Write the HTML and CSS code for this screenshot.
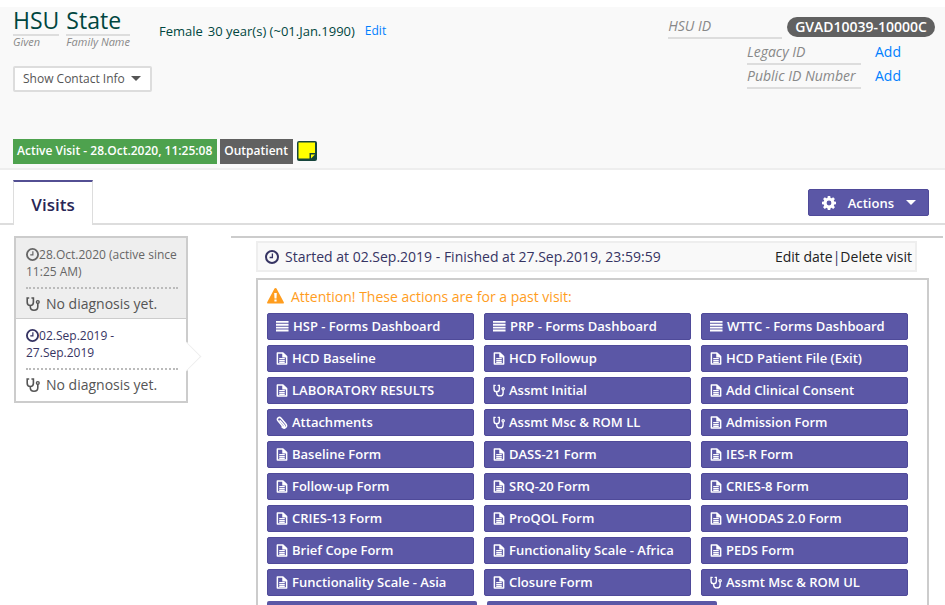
FILE: index.html
```html
<!DOCTYPE html>
<html lang="en">
<head>
<meta charset="utf-8">
<title>HSU State - Visits</title>
<link rel="stylesheet" href="styles.css">
</head>
<body>
<svg class="sprite" aria-hidden="true">
  <symbol id="bars" viewBox="0 0 14 12"><path fill="currentColor" d="M0 .5h13.500v2H0zM0 3.600h13.500v2H0zM0 6.700h13.500v2H0zM0 9.800h13.500v2H0z"/></symbol>
  <symbol id="file" viewBox="0 0 12 14"><path fill="none" stroke="currentColor" stroke-width="1.600" stroke-linejoin="round" d="M1 1h6l4 4v8H1z"/><path fill="currentColor" d="M6.300 1H7l4 4v1H6.300z"/><path stroke="currentColor" stroke-width="1.300" d="M3 7.200h6M3 9.200h6M3 11.200h6"/></symbol>
  <symbol id="steth" viewBox="0 0 14 14"><path fill="none" stroke="currentColor" stroke-width="1.600" stroke-linecap="round" d="M2.600 1H1.200v4.200c0 2 1.300 3.300 3.100 3.300s3.100-1.300 3.100-3.300V1H6M4.300 8.500v1.300c0 2 1.500 3.400 3.700 3.400s3.800-1.400 3.800-3.400V6.500"/><circle cx="11.800" cy="5" r="1.400" fill="none" stroke="currentColor" stroke-width="1.400"/></symbol>
  <symbol id="clip" viewBox="0 0 12 14"><path fill="none" stroke="currentColor" stroke-width="1.600" stroke-linecap="round" d="M4 5l4.300 5c1 1.200-.5 2.400-1.500 1.200L1.700 5.200C-.2 2.900 2.900.1 5 2.400l5 5.900c2.600 3.200-1.500 6.300-3.900 3.600"/></symbol>
  <symbol id="clock" viewBox="0 0 14 14"><circle cx="7" cy="7" r="6" fill="none" stroke="currentColor" stroke-width="2"/><path fill="none" stroke="currentColor" stroke-width="1.300" d="M7.400 3.500v4H4.600"/></symbol>
  <symbol id="warn" viewBox="0 0 17 16"><path fill="currentColor" fill-rule="evenodd" d="M8.500 0c.5 0 .8.200 1 .6l7.200 13.400c.5.900 0 1.600-.9 1.600H1.200c-.9 0-1.400-.7-.9-1.600L7.500.6c.2-.4.500-.6 1-.6zM7.200 5l.3 5.500h2L9.800 5zM7.400 11.600v2h2.200v-2z"/></symbol>
  <symbol id="gear" viewBox="0 0 14 14"><path fill="currentColor" fill-rule="evenodd" d="M5.800 0h2.400l.4 1.900 1 .4 1.600-1.100 1.700 1.700-1.100 1.600.4 1 1.800.3v2.400l-1.800.4-.4 1 1.100 1.600-1.700 1.700-1.600-1.100-1 .4-.4 1.800H5.800l-.4-1.800-1-.4-1.600 1.100-1.700-1.700 1.100-1.600-.4-1L0 8.200V5.800l1.800-.3.4-1-1.100-1.600 1.700-1.700 1.600 1.100 1-.4zM7 4.600a2.400 2.400 0 1 0 0 4.800 2.400 2.400 0 0 0 0-4.800z"/></symbol>
</svg>

<header class="patient">
  <div class="top">
    <div class="who">
      <div class="identity">
        <h1 class="names">
          <span class="name"><span class="value">HSU</span><small>Given</small></span>
          <span class="name"><span class="value">State</span><small>Family Name</small></span>
        </h1>
        <p class="demo"><span>Female</span><span>30 year(s) (~01.Jan.1990)</span><a href="#">Edit</a></p>
      </div>
      <button class="contact" type="button">Show Contact Info <i class="caret"></i></button>
    </div>
    <div class="ids">
      <div class="id"><em>HSU ID</em><b class="pill">GVAD10039-10000C</b></div>
      <div class="id"><em>Legacy ID</em><a href="#">Add</a></div>
      <div class="id"><em>Public ID Number</em><a href="#">Add</a></div>
    </div>
  </div>
  <div class="tags">
    <span class="tag active">Active Visit - 28.Oct.2020, 11:25:08</span>
    <span class="tag">Outpatient</span>
    <svg class="note" viewBox="0 0 20 20"><rect width="20" height="20" rx="2" fill="#16453c"/><path fill="#ff0" d="M1.500 1.500h16.500v10.500h-5.500v5.500H1.500z"/><path fill="#ff0" d="M14 13.500h4l-4 4z"/></svg>
  </div>
</header>

<nav class="tabs">
  <a class="tab" href="#">Visits</a>
  <button class="actions" type="button"><svg><use href="#gear"/></svg><span>Actions</span><i class="caret"></i></button>
</nav>

<main class="content">
  <aside class="visits">
    <article class="visit">
      <p class="date"><svg><use href="#clock"/></svg> 28.Oct.2020 (active since 11:25 AM)</p>
      <p class="diagnosis"><svg><use href="#steth"/></svg>No diagnosis yet.</p>
    </article>
    <article class="visit selected">
      <p class="date"><svg><use href="#clock"/></svg> 02.Sep.2019 -<br>27.Sep.2019</p>
      <p class="diagnosis"><svg><use href="#steth"/></svg>No diagnosis yet.</p>
    </article>
  </aside>
  <section class="detail">
    <div class="period">
      <svg><use href="#clock"/></svg>
      <span>Started at 02.Sep.2019 - Finished at 27.Sep.2019, 23:59:59</span>
      <span class="links"><a href="#">Edit date</a>|<a href="#">Delete visit</a></span>
    </div>
    <div class="panel">
      <p class="attention"><svg><use href="#warn"/></svg>Attention! These actions are for a past visit:</p>
      <div class="forms">
        <button type="button"><svg class="wide"><use href="#bars"/></svg>HSP - Forms Dashboard</button>
        <button type="button"><svg class="wide"><use href="#bars"/></svg>PRP - Forms Dashboard</button>
        <button type="button"><svg class="wide"><use href="#bars"/></svg>WTTC - Forms Dashboard</button>
        <button type="button"><svg><use href="#file"/></svg>HCD Baseline</button>
        <button type="button"><svg><use href="#file"/></svg>HCD Followup</button>
        <button type="button"><svg><use href="#file"/></svg>HCD Patient File (Exit)</button>
        <button type="button"><svg><use href="#file"/></svg>LABORATORY RESULTS</button>
        <button type="button"><svg><use href="#steth"/></svg>Assmt Initial</button>
        <button type="button"><svg><use href="#file"/></svg>Add Clinical Consent</button>
        <button type="button"><svg><use href="#clip"/></svg>Attachments</button>
        <button type="button"><svg><use href="#steth"/></svg>Assmt Msc &amp; ROM LL</button>
        <button type="button"><svg><use href="#file"/></svg>Admission Form</button>
        <button type="button"><svg><use href="#file"/></svg>Baseline Form</button>
        <button type="button"><svg><use href="#file"/></svg>DASS-21 Form</button>
        <button type="button"><svg><use href="#file"/></svg>IES-R Form</button>
        <button type="button"><svg><use href="#file"/></svg>Follow-up Form</button>
        <button type="button"><svg><use href="#file"/></svg>SRQ-20 Form</button>
        <button type="button"><svg><use href="#file"/></svg>CRIES-8 Form</button>
        <button type="button"><svg><use href="#file"/></svg>CRIES-13 Form</button>
        <button type="button"><svg><use href="#file"/></svg>ProQOL Form</button>
        <button type="button"><svg><use href="#file"/></svg>WHODAS 2.0 Form</button>
        <button type="button"><svg><use href="#file"/></svg>Brief Cope Form</button>
        <button type="button"><svg><use href="#file"/></svg>Functionality Scale - Africa</button>
        <button type="button"><svg><use href="#file"/></svg>PEDS Form</button>
        <button type="button"><svg><use href="#file"/></svg>Functionality Scale - Asia</button>
        <button type="button"><svg><use href="#file"/></svg>Closure Form</button>
        <button type="button"><svg><use href="#steth"/></svg>Assmt Msc &amp; ROM UL</button>
      </div>
      <div class="more"><span></span><span></span></div>
    </div>
  </section>
</main>
</body>
</html>
```
FILE: styles.css
```css
* { box-sizing: border-box; }
html { overflow: hidden; }
body {
  margin: 0;
  height: 100vh;
  overflow: hidden;
  padding-top: 7px;
  background: #fff;
  color: #363463;
  font: 13px/18px "Open Sans", sans-serif;
}
h1, p { margin: 0; font-weight: 400; }
a { color: #007fff; text-decoration: none; }
button { font: inherit; cursor: pointer; }
svg { width: 14px; height: 14px; flex: none; }
.sprite { position: absolute; width: 0; height: 0; }
.caret {
  display: inline-block;
  border: 5px solid transparent;
  border-top-color: currentColor;
  border-bottom: 0;
}

.patient {
  background: #f9f9f9;
  border-bottom: 2px solid #eee;
  padding: 0 10px 4px 13px;
}
.top { display: flex; justify-content: space-between; height: 132px; }
.identity { display: flex; gap: 29px; }
.names { display: flex; gap: 7px; color: #00463f; }
.name { display: flex; flex-direction: column; }
.value {
  font-size: 23px;
  line-height: 27px;
  border-bottom: 2px solid #ddd;
}
.name small {
  font-size: 11px;
  line-height: 12px;
  font-style: italic;
  color: #888;
}
.demo { display: flex; gap: 5px; padding-top: 15px; color: #00463f; }
.demo a { font-size: 12px; padding-left: 5px; }
.contact {
  display: flex;
  align-items: center;
  gap: 6px;
  height: 26px;
  margin-top: 18px;
  padding: 0 9px 0 8px;
  border: 2px solid #ddd;
  border-radius: 2px;
  background: #fff;
  color: #555;
  font-size: 12px;
}
.contact .caret { margin-bottom: 2px; }
.ids { padding-top: 10px; font-size: 14px; }
.id { display: flex; justify-content: flex-end; height: 24px; gap: 14px; }
.id em {
  width: 114px;
  height: 22px;
  border-bottom: 2px solid #ddd;
  color: #888;
}
.id a { width: 60px; }
.id:first-child { gap: 5px; height: 26px; }
.pill {
  height: 20px;
  line-height: 20px;
  padding: 0 8px;
  border-radius: 10px;
  background: #616161;
  color: #fff;
  font-weight: 600;
}
.tags { display: flex; gap: 3px; }
.tag {
  height: 25px;
  line-height: 24px;
  padding: 0 5px 0 4px;
  background: #616161;
  color: #fff;
  font-weight: 600;
  font-size: 12px;
}
.tag.active { background: #4ea24e; }
.note { width: 20px; height: 20px; margin: 2px 0 0 1px; }

.tabs {
  display: flex;
  justify-content: space-between;
  align-items: flex-start;
  height: 55px;
  padding: 10px 16px 0 13px;
  border-bottom: 2px solid #ddd;
}
.tab {
  width: 80px;
  height: 45px;
  padding-top: 12px;
  border: 1px solid #ddd;
  border-top: 2px solid #534f93;
  border-bottom: 0;
  background: #fff;
  color: #292656;
  font-size: 17px;
  line-height: 22px;
  font-weight: 600;
  text-align: center;
}
.actions {
  display: flex;
  align-items: center;
  gap: 12px;
  height: 27px;
  margin-top: 9px;
  padding: 0 12px 0 13px;
  border: 1px solid #4f4a99;
  border-radius: 2px;
  background: #5b57a6;
  color: #fff;
  font-weight: 600;
}

.content { display: flex; padding: 11px 2px 0 14px; gap: 43px; align-items: flex-start; }
.visits { width: 174px; flex: none; border: 2px solid #ccc; }
.visit { position: relative; padding: 8px 8px 8px 10px; height: 82px; color: #363463; }
.visit:first-child { height: 81px; background: #eee; color: #666; border-bottom: 1px solid #ccc; }
.date { font-size: 12px; line-height: 17px; height: 43px; border-bottom: 2px dotted #bbb; }
.date svg { width: 13px; height: 13px; vertical-align: -2px; margin-right: -3px; }
.diagnosis { display: flex; align-items: center; gap: 6px; padding-top: 6px; font-size: 14px; color: #555; }
.selected::after {
  content: "";
  position: absolute;
  top: 27px;
  right: -11px;
  width: 20px;
  height: 20px;
  background: #fff;
  border: solid #eee;
  border-width: 1px 1px 0 0;
  transform: rotate(45deg);
}
.detail { flex: 1; border-top: 2px solid #ccc; padding: 3px 14px 0 25px; }
.period {
  display: flex;
  align-items: center;
  gap: 6px;
  height: 31px;
  margin-right: 12px;
  padding: 0 3px 0 7px;
  border: 2px solid #eee;
  background: #f9f9f9;
  font-size: 14px;
}
.links { margin-left: auto; }
.links a { color: #222; }
.panel { margin-top: 6px; padding: 8px 19px 0 9px; border: 2px solid #ccc; }
.attention { display: flex; gap: 7px; height: 25px; color: #ff9d1e; font-size: 14px; line-height: 17px; }
.attention svg { width: 17px; height: 16px; }
.forms { display: grid; grid-template-columns: repeat(3, 1fr); gap: 5px 10px; }
.forms button {
  display: flex;
  align-items: center;
  gap: 4px;
  height: 27px;
  padding: 0 8px 1px;
  border: 1px solid #4f4a99;
  border-radius: 2px;
  background: #5b57a6;
  color: #fff;
  font-weight: 600;
  white-space: nowrap;
}
.forms svg { width: 12px; height: 13px; }
.forms .wide { width: 13px; height: 12px; }
.more { display: flex; gap: 10px; padding-top: 5px; }
.more span { width: 210px; height: 27px; border-radius: 2px; background: #5b57a6; }
.more span + span { width: 230px; }
```
